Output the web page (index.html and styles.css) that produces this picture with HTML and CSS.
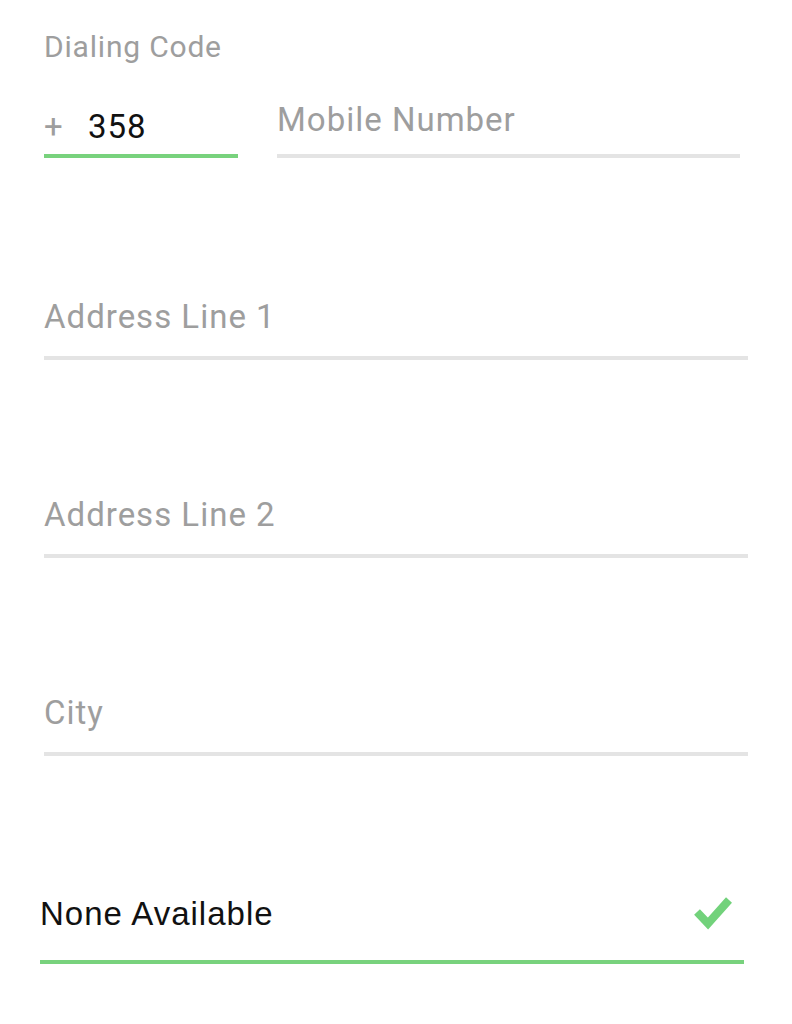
FILE: index.html
```html
<!DOCTYPE html>
<html lang="en">
<head>
<meta charset="utf-8">
<title>Contact form</title>
<link rel="stylesheet" href="styles.css">
</head>
<body>
<main class="form">
  <div class="phone-row">
    <div class="dial">
      <div class="dial-label">Dialing Code</div>
      <div class="dial-value"><span class="plus">+</span><span class="code">358</span></div>
    </div>
    <div class="field mobile"><span class="placeholder">Mobile Number</span></div>
  </div>
  <div class="field address first"><span class="placeholder">Address Line 1</span></div>
  <div class="field address"><span class="placeholder">Address Line 2</span></div>
  <div class="field address"><span class="placeholder">City</span></div>
  <div class="field select">
    <span class="value">None Available</span>
    <svg class="check" width="44" height="36" viewBox="0 0 44 36" aria-hidden="true">
      <path d="M7 16 L18 27.5 L39 4" fill="none" stroke="#72d27b" stroke-width="8" stroke-linejoin="miter"/>
    </svg>
  </div>
</main>
</body>
</html>
```
FILE: styles.css
```css
html, body {
  margin: 0;
  background: #ffffff;
}
body {
  font-family: Roboto, "Noto Sans", "Liberation Sans", sans-serif;
}
.form {
  padding: 30px 44px 0 44px;
}
.phone-row {
  display: flex;
  align-items: flex-end;
  gap: 39px;
  margin-right: 8px;
}
.dial {
  width: 194px;
  flex: none;
}
.dial-label {
  font-size: 30px;
  line-height: 34px;
  letter-spacing: 0.8px;
  color: #9e9e9e;
  margin-bottom: 44px;
}
.dial-value {
  display: flex;
  align-items: baseline;
  font-size: 33px;
  line-height: 38px;
  padding-bottom: 8px;
  border-bottom: 4px solid #78d27d;
}
.plus {
  color: #9e9e9e;
  width: 44px;
}
.code {
  color: #111111;
  letter-spacing: 1px;
}
.field {
  font-size: 33px;
  line-height: 38px;
  letter-spacing: 1px;
  border-bottom: 4px solid #e4e4e4;
  padding-bottom: 20px;
}
.placeholder {
  color: #9e9e9e;
}
.mobile {
  flex: 1;
  padding-bottom: 15px;
}
.address {
  margin-top: 136px;
}
.address.first {
  margin-top: 140px;
}
.select {
  display: flex;
  align-items: center;
  justify-content: space-between;
  margin: 139px 4px 0 -4px;
  padding-bottom: 27px;
  border-bottom-color: #78d27d;
}
.value {
  color: #111111;
  font-family: "Liberation Sans", Arial, sans-serif;
  letter-spacing: 1px;
}
.check {
  display: block;
  margin-right: 10px;
}
```
